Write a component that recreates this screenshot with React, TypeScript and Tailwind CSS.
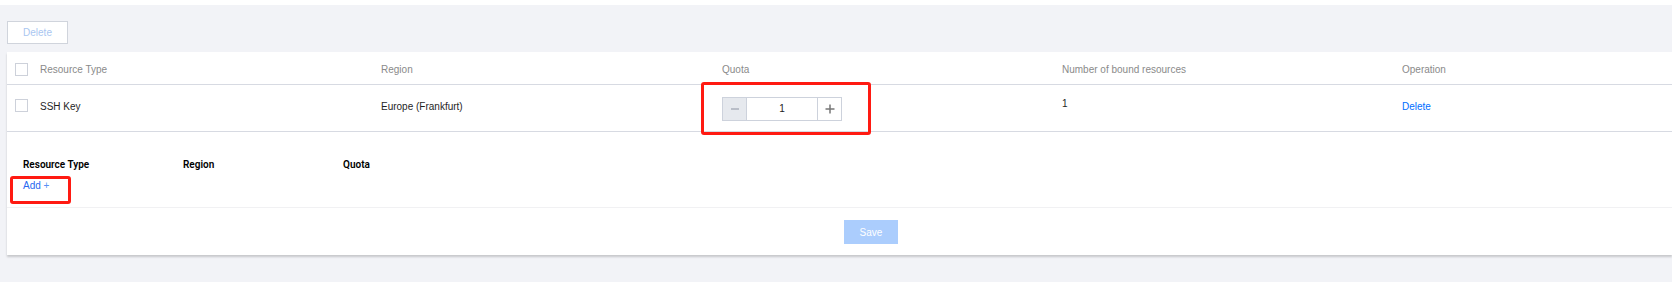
const columns = ['Resource Type', 'Region', 'Quota', 'Number of bound resources', 'Operation'];

function Checkbox() {
  return <span className="block w-[13px] h-[13px] border border-[#cdd1da] bg-white" />;
}

function Stepper({ value }: { value: number }) {
  return (
    <div className="flex w-[120px] h-[24px] border border-[#cdd2dc]">
      <button className="w-[24px] h-full bg-[#e6e9ee] border-r border-[#cdd2dc] flex items-center justify-center">
        <span className="block w-[8px] h-[1.5px] bg-[#b9bec8]" />
      </button>
      <div className="flex-1 flex items-center justify-center text-[10px] text-[#222]">{value}</div>
      <button className="w-[24px] h-full border-l border-[#cdd2dc] flex items-center justify-center">
        <svg width="10" height="10" viewBox="0 0 10 10">
          <path d="M5 0.5v9M0.5 5h9" stroke="#777" strokeWidth="1.5" />
        </svg>
      </button>
    </div>
  );
}

export default function App() {
  return (
    <div className="w-[1672px] h-[282px] bg-[#f2f3f7] font-['Liberation_Sans',Arial,sans-serif] text-[10px] overflow-hidden">
      <div className="h-[5px] bg-white" />
      <div className="pl-[7px]">
        <button className="mt-[16px] w-[61px] h-[23px] bg-white border border-[#d0d4dc] text-[#a9c6f1] text-[10px] flex items-center justify-center">
          Delete
        </button>

        <div className="relative mt-[8px] bg-white shadow-[0_2px_2px_rgba(0,0,0,0.18)]">
          {/* table header */}
          <div className="grid grid-cols-[21px_341px_341px_340px_340px_1fr] h-[33px] border-b border-[#d7dae2] items-center pt-[3px]">
            <div className="pl-[8px]">
              <Checkbox />
            </div>
            {columns.map((c) => (
              <div key={c} className="pl-3 text-[#8a8a8a] leading-[14px]">
                {c}
              </div>
            ))}
          </div>

          {/* table row */}
          <div className="grid grid-cols-[21px_341px_341px_340px_340px_1fr] h-[47px] border-b border-[#d7dae2] items-start leading-[14px] text-[#1f1f1f]">
            <div className="pl-[8px] pt-[14px]">
              <Checkbox />
            </div>
            <div className="pl-3 pt-[15px]">SSH Key</div>
            <div className="pl-3 pt-[15px]">Europe (Frankfurt)</div>
            <div className="pl-3 pt-[12px]">
              <Stepper value={1} />
            </div>
            <div className="pl-3 pt-[12px]">1</div>
            <div className="pl-3 pt-[15px]">
              <a className="text-[#006eff] cursor-pointer">Delete</a>
            </div>
          </div>

          {/* add section */}
          <div className="h-[75px] pt-[26px] leading-[14px]">
            <div className="grid grid-cols-[160px_160px_160px] font-['Roboto',sans-serif] font-semibold text-[10px] text-black">
              <div className="pl-4">Resource Type</div>
              <div className="pl-4">Region</div>
              <div className="pl-4">Quota</div>
            </div>
            <div className="pl-4 mt-[7px] text-[#2769f0]">
              Add <span className="text-[#5a8ff5]">+</span>
            </div>
          </div>

          {/* footer */}
          <div className="h-[48px] border-t border-[#f1f1f3] pt-[12px] pl-[837px]">
            <button className="w-[54px] h-[24px] bg-[#abcdfd] text-white text-[10px] flex items-center justify-center">
              Save
            </button>
          </div>

          {/* annotation boxes */}
          <div className="absolute left-[694px] top-[30px] w-[170px] h-[53px] border-[3px] border-[#ff1a12] rounded-[3px] pointer-events-none" />
          <div className="absolute left-[3px] top-[124px] w-[61px] h-[28px] border-[3px] border-[#ff1a12] rounded-[3px] pointer-events-none" />
        </div>
      </div>
    </div>
  );
}
